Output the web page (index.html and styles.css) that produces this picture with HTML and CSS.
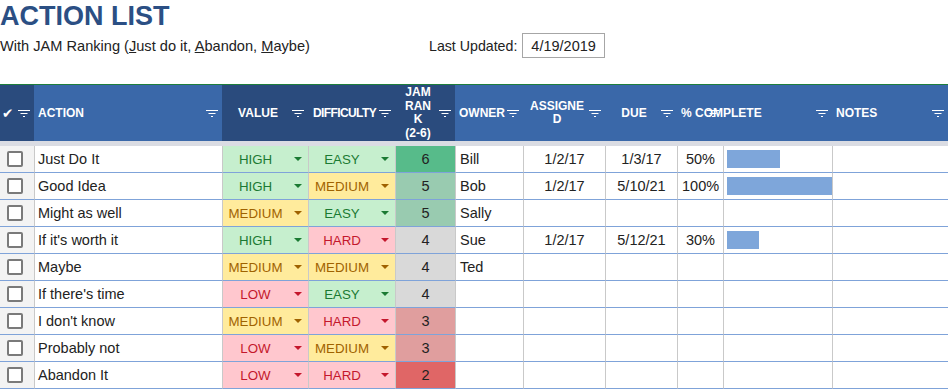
FILE: index.html
```html
<!DOCTYPE html>
<html lang="en">

<head>
    <meta charset="UTF-8" />
    <meta name="viewport" content="width=device-width, initial-scale=1.0" />
    <title>Action List</title>
    <link rel="stylesheet" href="styles.css">
</head>

<body>
    <!-- filter icon used in every header cell -->
    <svg class="defs" width="0" height="0">
        <symbol id="filter" viewBox="0 0 12 8">
            <path d="M0 1.5H12M2.5 4.5H9.5M5 7.5H7" stroke="#fff" stroke-width="1" fill="none" />
        </symbol>
    </svg>

    <div class="top">
        <h1 class="title">ACTION LIST</h1>
        <div class="subrow">
            <p class="subtitle">With JAM Ranking (<u>J</u>ust do it, <u>A</u>bandon, <u>M</u>aybe)</p>
            <p class="updated">Last Updated: <span class="date-box">4/19/2019</span></p>
        </div>
    </div>

    <table class="actions">
        <colgroup>
            <col style="width: 34px">
            <col style="width: 188px">
            <col style="width: 86px">
            <col style="width: 87px">
            <col style="width: 60px">
            <col style="width: 68px">
            <col style="width: 82px">
            <col style="width: 72px">
            <col style="width: 46px">
            <col style="width: 109px">
            <col style="width: 116px">
        </colgroup>
        <thead>
            <tr>
                <th class="dark">
                    <div class="hcell first"><span class="tick">✔</span><svg class="filter"><use href="#filter" /></svg></div>
                </th>
                <th>
                    <div class="hcell"><span class="htext">ACTION</span><svg class="filter"><use href="#filter" /></svg></div>
                </th>
                <th class="dark">
                    <div class="hcell"><span class="htext center">VALUE</span><svg class="filter"><use href="#filter" /></svg></div>
                </th>
                <th class="dark">
                    <div class="hcell"><span class="htext center squeeze">DIFFICULTY</span><svg class="filter"><use href="#filter" /></svg></div>
                </th>
                <th class="dark">
                    <div class="hcell"><span class="htext center wrap">JAM<br>RAN<br>K<br>(2-6)</span><svg class="filter"><use href="#filter" /></svg></div>
                </th>
                <th>
                    <div class="hcell"><span class="htext">OWNER</span><svg class="filter"><use href="#filter" /></svg></div>
                </th>
                <th>
                    <div class="hcell"><span class="htext center wrap">ASSIGNE<br>D</span><svg class="filter"><use href="#filter" /></svg></div>
                </th>
                <th>
                    <div class="hcell"><span class="htext center">DUE</span><svg class="filter"><use href="#filter" /></svg></div>
                </th>
                <th>
                    <div class="hcell"><span class="htext">% COMPLETE</span><svg class="filter"><use href="#filter" /></svg></div>
                </th>
                <th>
                    <div class="hcell"><span class="htext"></span><svg class="filter"><use href="#filter" /></svg></div>
                </th>
                <th>
                    <div class="hcell"><span class="htext">NOTES</span><svg class="filter"><use href="#filter" /></svg></div>
                </th>
            </tr>
        </thead>
        <tbody>
            <tr>
                <td class="check"><span class="box"></span></td>
                <td class="text">Just Do It</td>
                <td class="chip green"><div class="pick"><span>HIGH</span><i class="arrow"></i></div></td>
                <td class="chip green"><div class="pick"><span>EASY</span><i class="arrow"></i></div></td>
                <td class="rank r6">6</td>
                <td>Bill</td>
                <td class="mid">1/2/17</td>
                <td class="mid">1/3/17</td>
                <td class="mid">50%</td>
                <td class="progress"><div class="bar" style="width: 50%"></div></td>
                <td></td>
            </tr>
            <tr>
                <td class="check"><span class="box"></span></td>
                <td class="text">Good Idea</td>
                <td class="chip green"><div class="pick"><span>HIGH</span><i class="arrow"></i></div></td>
                <td class="chip yellow"><div class="pick"><span>MEDIUM</span><i class="arrow"></i></div></td>
                <td class="rank r5">5</td>
                <td>Bob</td>
                <td class="mid">1/2/17</td>
                <td class="mid">5/10/21</td>
                <td class="mid">100%</td>
                <td class="progress"><div class="bar" style="width: 100%"></div></td>
                <td></td>
            </tr>
            <tr>
                <td class="check"><span class="box"></span></td>
                <td class="text">Might as well</td>
                <td class="chip yellow"><div class="pick"><span>MEDIUM</span><i class="arrow"></i></div></td>
                <td class="chip green"><div class="pick"><span>EASY</span><i class="arrow"></i></div></td>
                <td class="rank r5">5</td>
                <td>Sally</td>
                <td></td>
                <td></td>
                <td></td>
                <td></td>
                <td></td>
            </tr>
            <tr>
                <td class="check"><span class="box"></span></td>
                <td class="text">If it's worth it</td>
                <td class="chip green"><div class="pick"><span>HIGH</span><i class="arrow"></i></div></td>
                <td class="chip red"><div class="pick"><span>HARD</span><i class="arrow"></i></div></td>
                <td class="rank r4">4</td>
                <td>Sue</td>
                <td class="mid">1/2/17</td>
                <td class="mid">5/12/21</td>
                <td class="mid">30%</td>
                <td class="progress"><div class="bar" style="width: 30%"></div></td>
                <td></td>
            </tr>
            <tr>
                <td class="check"><span class="box"></span></td>
                <td class="text">Maybe</td>
                <td class="chip yellow"><div class="pick"><span>MEDIUM</span><i class="arrow"></i></div></td>
                <td class="chip yellow"><div class="pick"><span>MEDIUM</span><i class="arrow"></i></div></td>
                <td class="rank r4">4</td>
                <td>Ted</td>
                <td></td>
                <td></td>
                <td></td>
                <td></td>
                <td></td>
            </tr>
            <tr>
                <td class="check"><span class="box"></span></td>
                <td class="text">If there's time</td>
                <td class="chip red"><div class="pick"><span>LOW</span><i class="arrow"></i></div></td>
                <td class="chip green"><div class="pick"><span>EASY</span><i class="arrow"></i></div></td>
                <td class="rank r4">4</td>
                <td></td>
                <td></td>
                <td></td>
                <td></td>
                <td></td>
                <td></td>
            </tr>
            <tr>
                <td class="check"><span class="box"></span></td>
                <td class="text">I don't know</td>
                <td class="chip yellow"><div class="pick"><span>MEDIUM</span><i class="arrow"></i></div></td>
                <td class="chip red"><div class="pick"><span>HARD</span><i class="arrow"></i></div></td>
                <td class="rank r3">3</td>
                <td></td>
                <td></td>
                <td></td>
                <td></td>
                <td></td>
                <td></td>
            </tr>
            <tr>
                <td class="check"><span class="box"></span></td>
                <td class="text">Probably not</td>
                <td class="chip red"><div class="pick"><span>LOW</span><i class="arrow"></i></div></td>
                <td class="chip yellow"><div class="pick"><span>MEDIUM</span><i class="arrow"></i></div></td>
                <td class="rank r3">3</td>
                <td></td>
                <td></td>
                <td></td>
                <td></td>
                <td></td>
                <td></td>
            </tr>
            <tr>
                <td class="check"><span class="box"></span></td>
                <td class="text">Abandon It</td>
                <td class="chip red"><div class="pick"><span>LOW</span><i class="arrow"></i></div></td>
                <td class="chip red"><div class="pick"><span>HARD</span><i class="arrow"></i></div></td>
                <td class="rank r2">2</td>
                <td></td>
                <td></td>
                <td></td>
                <td></td>
                <td></td>
                <td></td>
            </tr>
        </tbody>
    </table>
</body>

</html>
```

FILE: styles.css
```css
* {
    box-sizing: border-box;
}

body {
    margin: 0;
    font-family: "Liberation Sans", Arial, sans-serif;
    color: #222;
    background-color: #fff;
}

.defs {
    position: absolute;
}

/* title block */
.top {
    height: 85px;
    border-bottom: 1px solid #1e7e3c;
}

.title {
    margin: 0;
    padding-top: 1px;
    font-size: 27px;
    line-height: 31px;
    font-weight: bold;
    color: #2b4f84;
}

.subrow {
    display: grid;
    grid-template-columns: 429px auto;
    align-items: center;
    height: 25px;
    margin-top: 1px;
}

.subtitle,
.updated {
    margin: 0;
    font-size: 14.6px;
}

.updated {
    display: flex;
    align-items: center;
    gap: 5px;
    font-size: 14.2px;
}

.date-box {
    display: flex;
    align-items: center;
    height: 25px;
    padding: 0 8px;
    border: 1px solid #a6a6a6;
    font-size: 14.5px;
}

/* table */
.actions {
    width: 948px;
    border-collapse: separate;
    border-spacing: 0;
    table-layout: fixed;
}

.actions th {
    padding: 0;
    background-color: #3a68a9;
    color: #fff;
    font-size: 12px;
    font-weight: bold;
    border-bottom: 5px solid #dadce3;
}

.actions th.dark {
    background-color: #2a4b7d;
}

.hcell {
    display: flex;
    align-items: center;
    height: 56px;
    padding: 0 4px;
}

.hcell.first {
    padding-left: 2px;
    justify-content: space-between;
}

.tick {
    font-family: "DejaVu Sans", sans-serif;
    font-size: 13.5px;
}

.htext {
    flex: 1;
    min-width: 0;
    white-space: nowrap;
    text-align: left;
}

.htext.center {
    text-align: center;
}

.htext.wrap {
    line-height: 13.5px;
}

.htext.squeeze {
    letter-spacing: -0.6px;
}

.filter {
    flex: none;
    width: 12px;
    height: 8px;
    margin-left: 2px;
}

.actions td {
    height: 27px;
    padding: 0 4px;
    font-size: 14.5px;
    white-space: nowrap;
    border-left: 1px solid #c9c9c9;
    border-bottom: 1px solid #7fa3d9;
}

.actions td:first-child {
    border-left: none;
}

.actions td.text {
    padding-left: 3px;
}

.actions td.check {
    padding-left: 7px;
    background-color: #f3f3f3;
}

.box {
    display: block;
    width: 16px;
    height: 16px;
    border: 2px solid #7a7a7a;
    border-radius: 2px;
    background-color: #fff;
}

.mid {
    text-align: center;
}

/* dropdown chips */
.actions td.chip {
    padding: 0 6px 0 0;
}

.pick {
    display: flex;
    align-items: center;
    font-size: 13.3px;
}

.pick span {
    flex: 1;
    text-align: center;
}

.arrow {
    width: 0;
    height: 0;
    margin-left: 6px;
    border-left: 4px solid transparent;
    border-right: 4px solid transparent;
    border-top: 4px solid currentColor;
}

.green {
    background-color: #c6efce;
    color: #1b7a33;
}

.yellow {
    background-color: #ffeb9c;
    color: #9f6200;
}

.red {
    background-color: #ffc7ce;
    color: #c4172c;
}

/* JAM rank scale */
.rank {
    text-align: center;
}

.r6 {
    background-color: #57bb8a;
}

.r5 {
    background-color: #99cbb0;
}

.r4 {
    background-color: #d9d9d9;
}

.r3 {
    background-color: #e09e9e;
}

.r2 {
    background-color: #e06666;
}

.actions td.progress {
    padding: 0 0 0 3px;
}

.bar {
    height: 18px;
    background-color: #7ea6da;
}
```
